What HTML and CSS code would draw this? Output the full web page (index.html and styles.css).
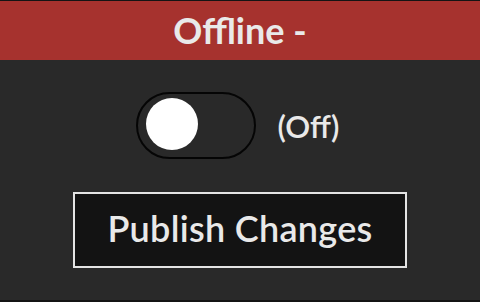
FILE: index.html
```html
<!DOCTYPE html>
<html>
<head>
<meta charset="utf-8">
<link rel="stylesheet" href="styles.css">
</head>
<body>
<div class="panel">
  <header class="status-bar">Offline -</header>
  <main class="content">
    <div class="toggle-row">
      <div class="toggle"><div class="knob"></div></div>
      <span class="toggle-label">(Off)</span>
    </div>
    <button class="publish">Publish Changes</button>
  </main>
</div>
</body>
</html>
```
FILE: styles.css
```css
html, body {
  margin: 0;
  padding: 0;
  background: #141414;
  height: 100%;
}
.panel {
  box-sizing: border-box;
  margin-top: 1px;
  height: 299px;
  background: #292929;
  display: flex;
  flex-direction: column;
  font-family: "Lato", "Noto Sans", sans-serif;
  color: #e9e9e9;
}
.status-bar {
  height: 59px;
  background: #a6322e;
  display: flex;
  align-items: center;
  justify-content: center;
  font-size: 36px;
  font-weight: 700;
  padding-bottom: 1px;
  box-sizing: border-box;
}
.content {
  display: flex;
  flex-direction: column;
  align-items: center;
  padding-top: 32px;
}
.toggle-row {
  display: flex;
  align-items: center;
  gap: 21px;
  margin-right: 4px;
}
.toggle {
  box-sizing: border-box;
  width: 120px;
  height: 67px;
  border: 2px solid #050505;
  border-radius: 34px;
  background: #292929;
  display: flex;
  align-items: center;
  padding-left: 8px;
}
.knob {
  width: 52px;
  height: 52px;
  border-radius: 50%;
  background: #ffffff;
  margin-top: -3px;
}
.toggle-label {
  font-size: 31px;
  font-weight: 600;
}
.publish {
  box-sizing: border-box;
  margin-top: 33px;
  width: 334px;
  height: 76px;
  background: #131313;
  border: 2px solid #e4e4e4;
  color: #e9e9e9;
  font-family: "Lato", "Noto Sans", sans-serif;
  font-size: 36px;
  font-weight: 600;
  letter-spacing: 0.3px;
  padding: 0 0 4px 0;
}
```
